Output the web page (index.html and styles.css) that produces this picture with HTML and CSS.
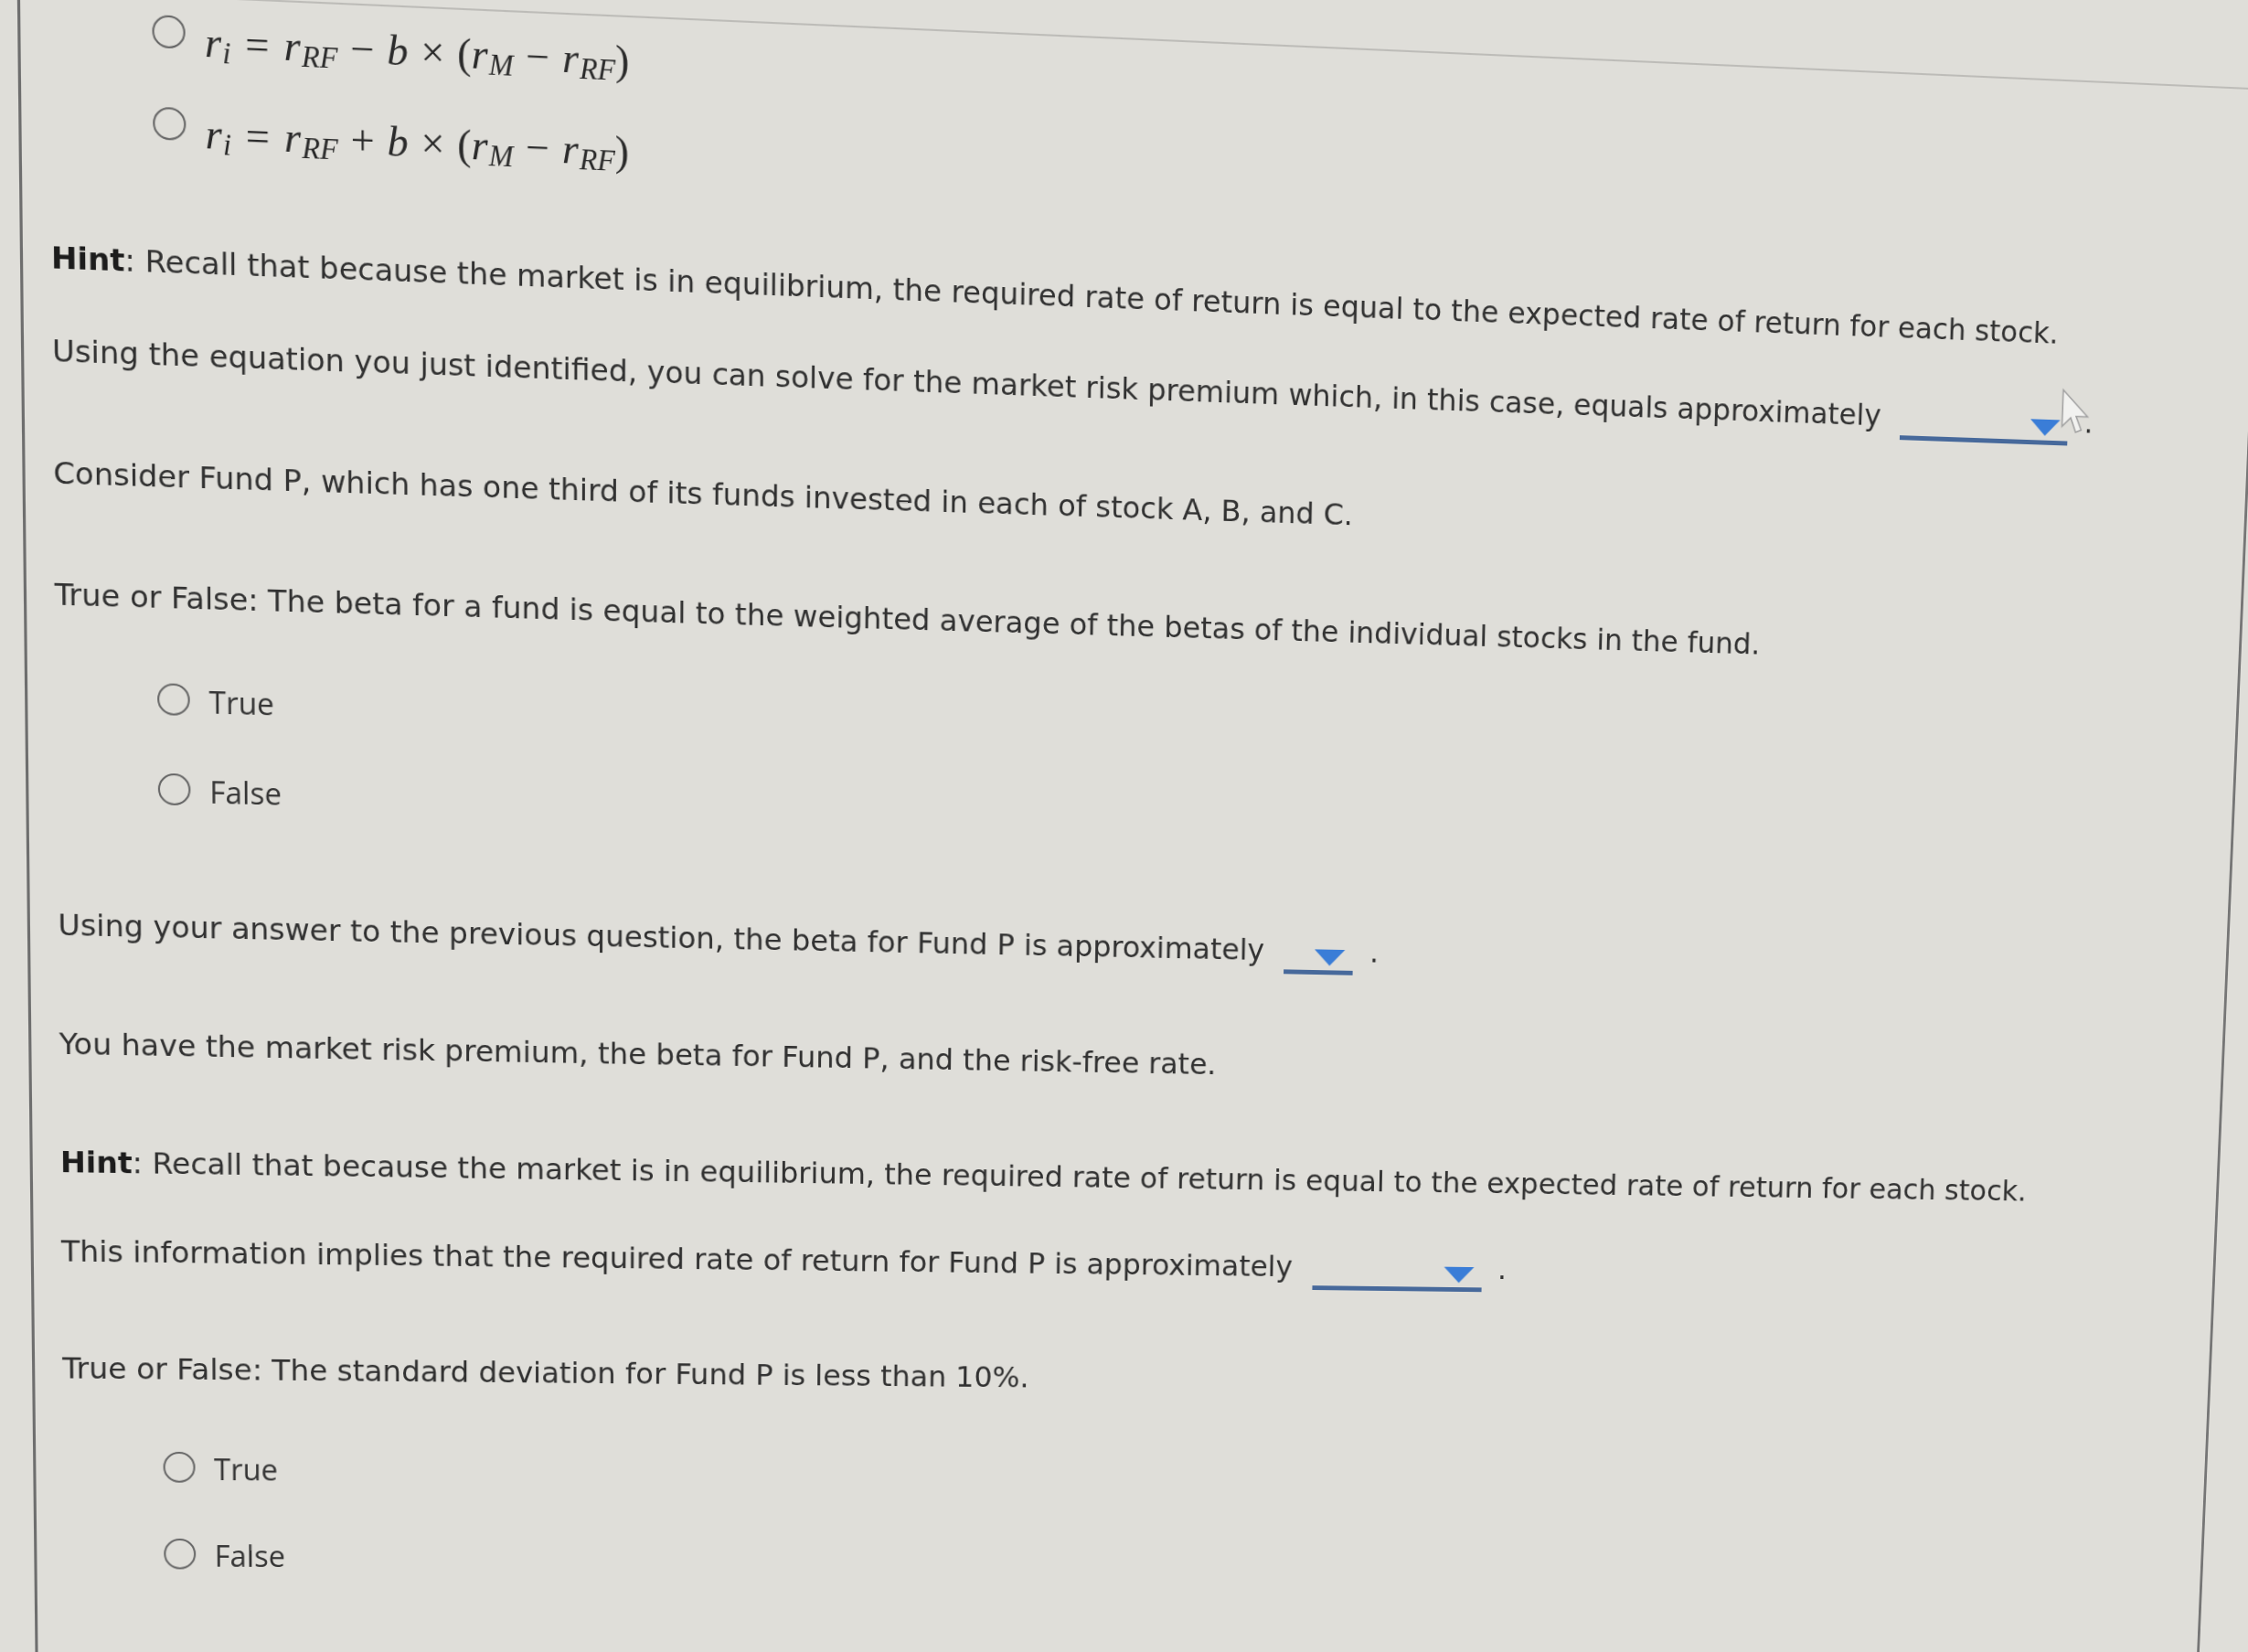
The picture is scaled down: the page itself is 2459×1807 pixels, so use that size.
FILE: index.html
```html
<!DOCTYPE html>
<html lang="en">
<head>
    <meta charset="UTF-8">
    <title>Market Risk Premium and Fund Beta</title>
    <link rel="stylesheet" href="styles.css">
</head>
<body>
    <div class="screen">
        <div class="sheet">
            <label class="choice formula">
                <input type="radio" name="capm">
                <span class="math"><i>r</i><sub><i>i</i></sub><span class="rel">=</span><i>r</i><sub><i>RF</i></sub><span class="bin">−</span><i>b</i><span class="bin">×</span>(<i>r</i><sub><i>M</i></sub><span class="bin">−</span><i>r</i><sub><i>RF</i></sub>)</span>
            </label>
            <label class="choice formula">
                <input type="radio" name="capm">
                <span class="math"><i>r</i><sub><i>i</i></sub><span class="rel">=</span><i>r</i><sub><i>RF</i></sub><span class="bin">+</span><i>b</i><span class="bin">×</span>(<i>r</i><sub><i>M</i></sub><span class="bin">−</span><i>r</i><sub><i>RF</i></sub>)</span>
            </label>

            <div class="para">
                <p><b>Hint</b>: Recall that because the market is in equilibrium, the required rate of return is equal to the expected rate of return for each stock.</p>
                <p class="ask follow">Using the equation you just identified, you can solve for the market risk premium which, in this case, equals approximately <span class="dropdown wide"><span class="arrow"></span><svg class="cursor" viewBox="0 0 20 31" width="36" height="54"><path d="M1 1 L1 24 L6.5 18.5 L10 27.5 L13.6 26 L10 17.5 L17.5 17.5 Z"/></svg></span> .</p>
            </div>

            <p class="para">Consider Fund P, which has one third of its funds invested in each of stock A, B, and C.</p>

            <p class="para">True or False: The beta for a fund is equal to the weighted average of the betas of the individual stocks in the fund.</p>

            <div class="options">
                <label class="choice"><input type="radio" name="fund-beta"><span class="label">True</span></label>
                <label class="choice"><input type="radio" name="fund-beta"><span class="label">False</span></label>
            </div>

            <p class="para ask after-options">Using your answer to the previous question, the beta for Fund P is approximately <span class="dropdown narrow"><span class="arrow"></span></span> .</p>

            <p class="para">You have the market risk premium, the beta for Fund P, and the risk-free rate.</p>

            <div class="para">
                <p><b>Hint</b>: Recall that because the market is in equilibrium, the required rate of return is equal to the expected rate of return for each stock.</p>
                <p class="ask follow">This information implies that the required rate of return for Fund P is approximately <span class="dropdown wide"><span class="arrow"></span></span> .</p>
            </div>

            <p class="para">True or False: The standard deviation for Fund P is less than 10%.</p>

            <div class="options">
                <label class="choice"><input type="radio" name="fund-sd"><span class="label">True</span></label>
                <label class="choice"><input type="radio" name="fund-sd"><span class="label">False</span></label>
            </div>
        </div>
    </div>
</body>
</html>
```

FILE: styles.css
```css
html, body {
    margin: 0;
    height: 100%;
}
body {
    background-color: #dfded9;
    overflow: hidden;
    font-family: "DejaVu Sans", Verdana, sans-serif;
    color: #313131;
}
/* the monitor is seen at an angle, so the whole page is tilted in perspective */
.screen {
    width: 2459px;
    height: 1900px;
    padding-top: 5px;
    box-sizing: border-box;
    transform-origin: 0 0;
    transform: matrix3d(1.073618, 0.047487, 0, 0.00002481,
                        0.012004, 1.066335, 0, 0.00002282,
                        0, 0, 1, 0,
                        -7.102, -19.315, 0, 1);
}
.sheet {
    margin-left: 24px;
    width: 2431px;
    min-height: 1900px;
    box-sizing: border-box;
    border-top: 2px solid #bdbcb8;
    border-left: 3px solid #6e6e6e;
    border-right: 3px solid #767676;
    padding: 20px 40px 0 29px;
    font-size: 32px;
    line-height: 40px;
}
p {
    margin: 0;
}
b {
    color: #1c1c1c;
}
.para {
    margin-top: 88px;
}
.follow {
    margin-top: 57px;
}
.after-options {
    margin-top: 106px;
}
/* lines holding a dropdown keep their normal height */
.ask {
    height: 40px;
}

/* radio choices */
.choice {
    display: flex;
    align-items: center;
}
.choice input {
    appearance: none;
    -webkit-appearance: none;
    flex: none;
    width: 34px;
    height: 34px;
    box-sizing: border-box;
    margin: 0 20px 4px 106px;
    border: 2px solid #666;
    border-radius: 50%;
    background: transparent;
}
.label {
    font-family: "Open Sans", sans-serif;
    font-size: 32px;
    line-height: 40px;
    color: #353535;
}
.options {
    margin-top: 70px;
}
.options .choice + .choice {
    margin-top: 56px;
}
.formula {
    align-items: flex-start;
}
.formula input {
    margin-top: -1px;
    margin-bottom: 0;
}
.formula + .formula {
    margin-top: 43px;
}

/* typeset equation */
.math {
    font-family: "Liberation Serif", "Times New Roman", serif;
    font-size: 44px;
    line-height: 52px;
    color: #2a2a2a;
}
.math i {
    font-style: italic;
}
.math sub {
    font-size: 0.7em;
    line-height: 0;
    vertical-align: -0.18em;
    margin-left: 0.04em;
}
.rel {
    margin: 0 0.34em;
}
.bin {
    margin: 0 0.3em;
}

/* answer dropdowns */
.dropdown {
    display: inline-block;
    position: relative;
    height: 32px;
    border-bottom: 5px solid #47699b;
    vertical-align: -15px;
    margin: 0 8px 0 12px;
}
.dropdown.wide {
    width: 191px;
}
.dropdown.narrow {
    width: 77px;
}
.arrow {
    display: block;
    width: 0;
    height: 0;
    margin: 9px 9px 0 auto;
    border-left: 17px solid transparent;
    border-right: 17px solid transparent;
    border-top: 18px solid #3a7dd7;
}
.cursor {
    position: absolute;
    left: 182px;
    top: -26px;
}
.cursor path {
    fill: rgba(255, 255, 255, 0.6);
    stroke: #a0a0a0;
    stroke-width: 0.9;
}
```
